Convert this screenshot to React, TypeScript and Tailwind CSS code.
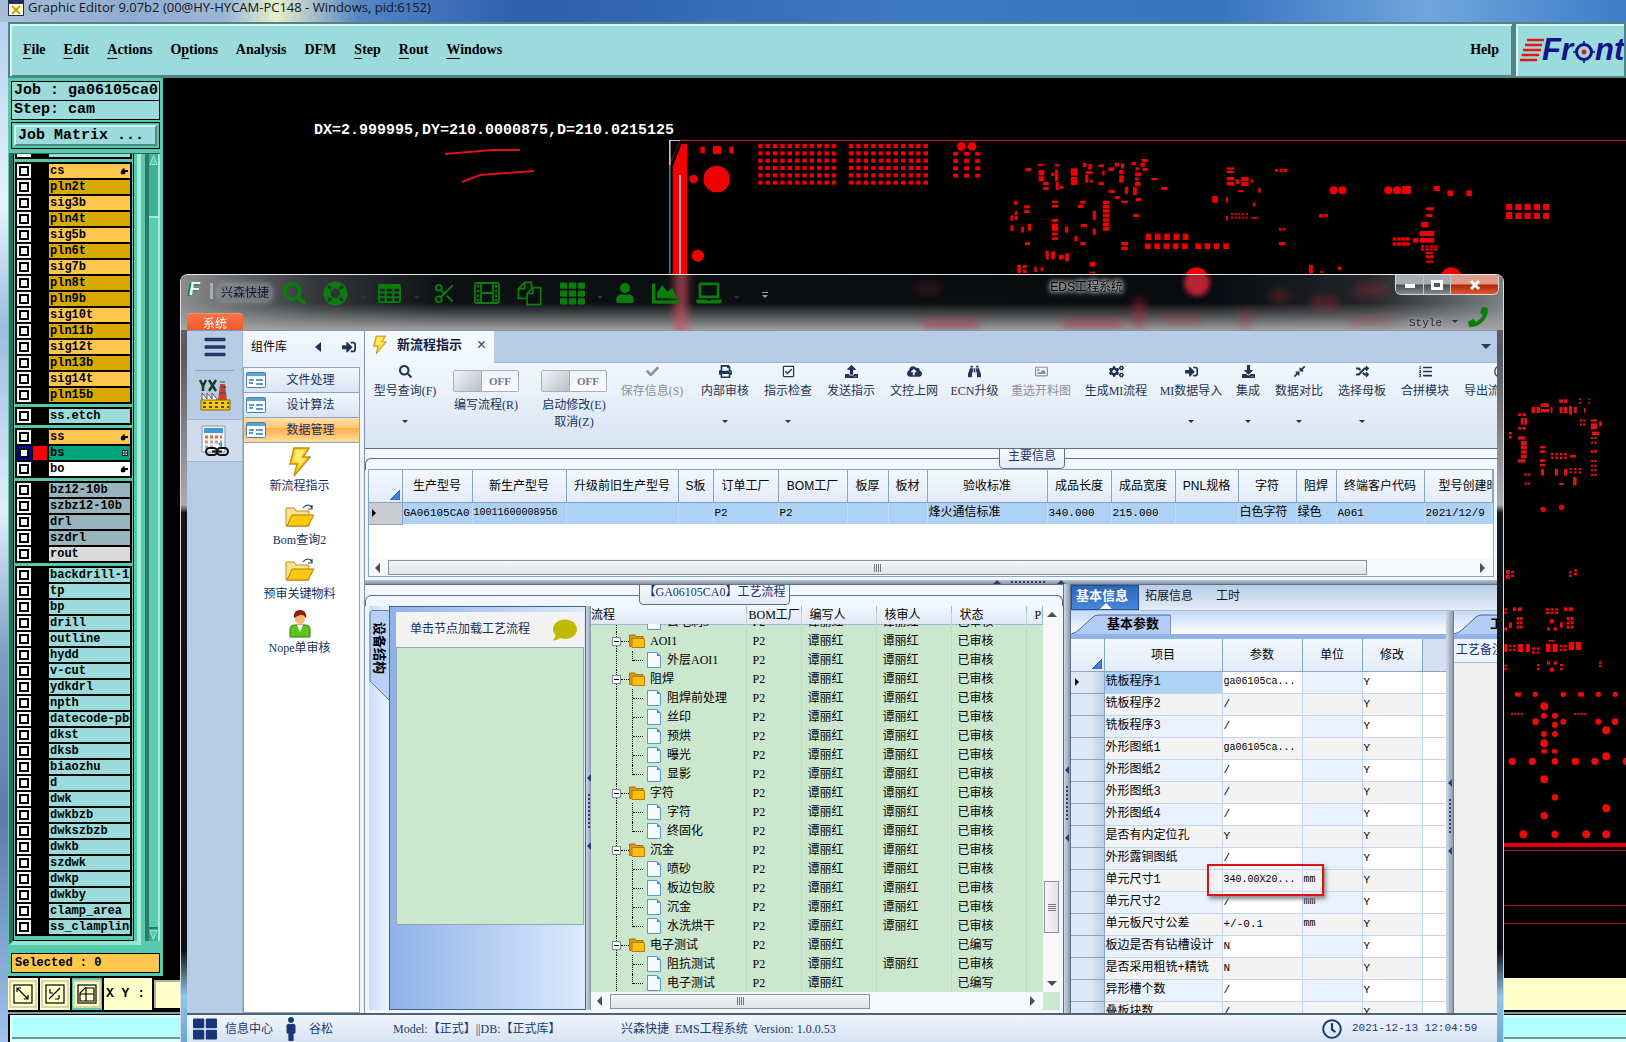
import React from "react";
import {
  FaBars, FaBinoculars, FaChartArea, FaCloudUploadAlt, FaCheck, FaCogs, FaDownload,
  FaLaptop, FaLifeRing, FaListOl, FaMale, FaPhoneAlt, FaPrint, FaRandom, FaRegCheckSquare,
  FaRegClock, FaRegImage, FaSearch, FaSignInAlt, FaTh, FaThLarge, FaUpload,
  FaUser, FaCompressAlt, FaComment,
} from "react-icons/fa";
import { Scissors } from "lucide-react";

const SERIF = "font-['Liberation_Serif','Noto_Sans_CJK_SC',serif]";
const SANS = "font-['Liberation_Sans','Noto_Sans_CJK_SC',sans-serif]";
const MONO = "font-['Liberation_Mono','Noto_Sans_CJK_SC',monospace]";

type Box = [number, number, number, number];

/* ---------- board artwork ---------- */

function Boxes({ items }: { items: Box[] }) {
  return (
    <>
      {items.map(([x, y, w, h], i) => (
        <rect key={i} x={x} y={y} width={w} height={h} />
      ))}
    </>
  );
}

function PadGrid({ x, y, cols, rows, dx, dy, w, h }: { x: number; y: number; cols: number; rows: number; dx: number; dy: number; w: number; h: number }) {
  const items: Box[] = [];
  for (let r = 0; r < rows; r++) for (let c = 0; c < cols; c++) items.push([x + c * dx, y + r * dy, w, h]);
  return <Boxes items={items} />;
}

const topPads: Box[] = [
  [96, 50, 7, 20], [116, 48, 13, 24], [142, 50, 7, 20],
  [613, 114, 9, 9], [633, 102, 9, 6], [660, 102, 7, 7], [634, 120, 9, 16], [634, 139, 9, 15], [654, 128, 5, 10], [660, 119, 5, 34],
  [641, 156, 9, 9], [641, 171, 9, 9], [661, 156, 5, 24], [668, 168, 5, 9], [685, 115, 10, 22], [685, 141, 10, 24], [704, 99, 6, 12],
  [713, 102, 6, 16], [709, 124, 11, 8], [708, 134, 5, 24], [715, 150, 5, 8], [729, 103, 9, 8], [735, 122, 4, 14], [729, 156, 9, 9],
  [745, 112, 9, 11], [755, 98, 7, 12], [765, 100, 5, 16], [762, 120, 7, 12], [762, 136, 7, 22], [782, 96, 7, 9], [798, 87, 10, 9], [796, 98, 7, 12],
  [788, 112, 6, 9], [799, 114, 9, 9], [787, 128, 10, 10], [787, 142, 6, 9], [787, 156, 9, 12], [771, 170, 5, 22], [784, 171, 6, 24],
  [745, 180, 10, 9], [755, 198, 8, 9], [765, 212, 11, 7], [788, 204, 9, 9], [813, 144, 11, 6], [829, 171, 10, 9],
  [595, 212, 5, 13], [611, 226, 9, 9], [611, 240, 9, 9], [596, 243, 5, 12], [589, 256, 5, 16], [596, 258, 5, 12], [589, 286, 5, 17],
  [606, 290, 5, 18], [617, 282, 5, 20], [612, 336, 8, 9], [655, 212, 10, 7], [655, 225, 10, 8], [700, 212, 9, 9], [696, 225, 9, 9],
  [720, 242, 5, 28], [736, 212, 10, 10], [736, 225, 10, 10], [736, 238, 10, 10], [736, 251, 10, 10], [736, 265, 10, 10], [736, 278, 10, 10], [736, 291, 10, 11],
  [655, 267, 10, 9], [655, 281, 10, 22], [655, 308, 10, 8], [655, 322, 10, 8], [676, 290, 5, 18], [691, 318, 5, 16], [701, 282, 10, 9], [720, 296, 5, 18], [700, 336, 9, 9],
  [784, 252, 10, 9], [765, 336, 11, 10], [765, 350, 11, 10], [645, 362, 5, 26], [654, 364, 6, 24], [666, 375, 8, 14], [676, 370, 6, 24],
  [600, 405, 6, 24], [609, 405, 6, 9], [609, 419, 6, 10], [627, 410, 4, 16], [637, 412, 4, 12], [715, 396, 9, 14], [715, 425, 9, 5],
  [933, 112, 12, 7], [933, 123, 12, 6], [933, 141, 12, 10], [933, 155, 12, 12], [947, 148, 6, 14], [956, 141, 12, 12], [956, 156, 12, 12], [971, 148, 4, 10],
  [951, 180, 8, 6], [983, 174, 4, 14], [910, 198, 9, 20], [932, 201, 3, 17], [975, 217, 3, 13],
  [932, 258, 3, 14], [972, 261, 9, 5],
  [1080, 252, 6, 11], [1088, 252, 6, 9], [1016, 294, 4, 8], [1022, 294, 4, 8], [1016, 336, 10, 9],
  [1212, 168, 14, 24], [1262, 168, 10, 15], [1284, 181, 9, 17], [1314, 181, 9, 17],
  [1250, 232, 13, 9], [1250, 252, 10, 9], [1242, 276, 12, 16], [1240, 303, 23, 15], [1240, 324, 23, 14], [1229, 324, 9, 14],
  [1250, 366, 12, 6], [1250, 376, 12, 9], [1250, 392, 12, 6],
  [1377, 246, 10, 21], [1064, 405, 6, 25], [1082, 423, 4, 6], [1110, 410, 5, 10],
];

const sidePads: Box[] = [
  [1376, 418, 11, 11], [1390, 418, 10, 11], [1433, 415, 6, 5], [1433, 426, 6, 5], [1460, 415, 5, 5], [1460, 426, 5, 5], [1323, 430, 24, 11], [1297, 441, 11, 18], [1311, 441, 11, 18],
  [1324, 447, 24, 10], [1352, 441, 5, 18], [1377, 441, 9, 18], [1390, 441, 10, 18], [1404, 438, 9, 26], [1418, 441, 9, 18], [1447, 444, 5, 14],
  [1258, 460, 10, 8], [1271, 460, 10, 8], [1266, 474, 8, 20], [1276, 474, 8, 20], [1258, 501, 10, 8], [1271, 501, 10, 8], [1232, 516, 8, 8], [1232, 528, 8, 8], [1258, 529, 22, 10], [1266, 543, 17, 14], [1266, 558, 17, 10],
  [1266, 571, 17, 10], [1266, 584, 17, 11], [1258, 598, 22, 10], [1276, 640, 7, 7], [1286, 640, 7, 7], [1276, 668, 7, 6], [1286, 668, 7, 6], [1321, 558, 16, 7], [1321, 571, 16, 8],
  [1321, 598, 16, 8], [1321, 612, 16, 7], [1324, 627, 9, 20], [1407, 585, 17, 8], [1364, 627, 9, 20],
  [1390, 627, 9, 20], [1416, 651, 10, 25], [1376, 669, 14, 6], [1436, 478, 6, 7], [1445, 478, 6, 7], [1436, 490, 6, 7], [1445, 490, 6, 7],
  [1467, 478, 18, 7], [1467, 490, 18, 18], [1491, 484, 8, 14], [1470, 515, 22, 10],
];

const lowerPads: Box[] = [
  [978, 30, 12, 11], [978, 44, 12, 12], [993, 33, 9, 7], [993, 44, 9, 7], [1167, 33, 8, 7], [1167, 44, 8, 7], [1182, 28, 9, 7], [1182, 39, 9, 7],
  [973, 145, 8, 6], [973, 155, 8, 6], [999, 142, 9, 11], [1014, 142, 12, 11], [1152, 142, 10, 11], [1166, 142, 13, 11],
  [987, 187, 9, 17], [973, 202, 8, 10], [1110, 178, 12, 12], [1140, 187, 9, 16],
  [1101, 202, 9, 10], [1121, 202, 10, 10], [973, 252, 10, 24], [1013, 252, 16, 24],
  [1038, 252, 12, 24], [1098, 252, 14, 24], [1118, 252, 15, 24], [1106, 240, 18, 5],
  [1166, 246, 16, 24], [1187, 246, 16, 24], [973, 314, 8, 6], [973, 324, 8, 6], [1071, 312, 8, 7], [1071, 324, 8, 7], [1101, 304, 9, 10], [1122, 304, 9, 10],
  [1110, 323, 12, 12], [1140, 312, 9, 7], [1140, 324, 9, 7], [1257, 304, 8, 7], [1257, 315, 8, 6], [1005, 397, 18, 13], [1194, 397, 18, 13], [1084, 568, 17, 12], [1116, 568, 17, 12],
];

const lowerVias: [number, number, number][] = [
  [1066, 403, 8], [1150, 403, 8], [1255, 403, 8], [1306, 403, 8], [1093, 439, 12], [1092, 467, 9], [1125, 467, 9], [1067, 485, 10], [1125, 494, 9], [1150, 485, 9],
  [1255, 485, 9], [1305, 485, 10], [1279, 511, 12], [1092, 522, 9], [1125, 522, 9], [1093, 550, 12], [1279, 589, 12], [997, 604, 11], [1057, 604, 11], [1125, 604, 10],
  [1186, 604, 11], [1245, 604, 11], [1338, 604, 10], [1093, 658, 12], [1125, 712, 10], [1279, 745, 12], [1093, 767, 11], [1030, 823, 12], [1125, 823, 11], [1219, 823, 12], [1279, 823, 12],
];

function BoardArtwork() {
  return (
    <svg className="absolute inset-0 h-full w-full" aria-hidden="true">
      <g transform="translate(-163 -78)">
        <path d="M445 154 L492 150 L520 150 M462 182 L480 175 L534 171" fill="none" stroke="#e01212" strokeWidth="2" />
        <g transform="translate(640 130) scale(.6288 .3333)" fill="#f00000">
          <rect x="63" y="30" width="1700" height="3" fill="#d01010" />
          <path d="M52 470V110L66 42H75V470Z" />
          <rect x="62" y="135" width="3" height="330" fill="#b8b8b8" />
          <path d="M47 105 L63 34" stroke="#c01010" strokeWidth="1.5" />
          <path d="M47.5 105V31H64" fill="none" stroke="#fff" strokeWidth="2" />
          <path d="M47.500 105V470" fill="none" stroke="#4fd0d0" strokeWidth="1.6" />
          <ellipse cx="122" cy="147" rx="21" ry="40" />
          <ellipse cx="85" cy="147" rx="7" ry="13" />
          <ellipse cx="92" cy="377" rx="10" ry="18" />
          <ellipse cx="511" cy="49" rx="7" ry="13" />
          <ellipse cx="528" cy="49" rx="7" ry="13" />
          <PadGrid x={188} y={42} cols={11} rows={6} dx={11.7} dy={22} w={7} h={12} />
          <PadGrid x={332} y={42} cols={11} rows={6} dx={11.9} dy={22} w={7} h={12} />
          <PadGrid x={498} y={65} cols={3} rows={4} dx={17.5} dy={22} w={8} h={12} />
          <PadGrid x={804} y={311} cols={5} rows={1} dx={14.8} dy={0} w={9} h={19} />
          <PadGrid x={803} y={340} cols={5} rows={1} dx={14.8} dy={0} w={9} h={17} />
          <PadGrid x={883} y={340} cols={4} rows={1} dx={14.8} dy={0} w={9} h={17} />
          <PadGrid x={1377} y={222} cols={5} rows={2} dx={14.8} dy={27} w={10} h={18} />
          <PadGrid x={940} y={249} cols={5} rows={2} dx={6} dy={11} w={3} h={6} />
          <PadGrid x={1010} y={117} cols={3} rows={1} dx={7} dy={0} w={5} h={9} />
          <PadGrid x={1197} y={322} cols={4} rows={2} dx={7} dy={15} w={6} h={10} />
          <PadGrid x={1242} y={346} cols={4} rows={2} dx={7} dy={9} w={5} h={7} />
          {[[1103, 181], [1117, 181], [1190, 181], [1204, 181]].map(([x, y]) => (
            <ellipse key={x} cx={x} cy={y} rx="6.500" ry="12" />
          ))}
          <ellipse cx="885" cy="450" rx="19" ry="38" />
          <ellipse cx="1290" cy="450" rx="18" ry="38" />
          <Boxes items={topPads} />
        </g>
        <g transform="translate(1080 260) scale(.3482 .3333)" fill="#dd1414">
          <Boxes items={sidePads} />
          <PadGrid x={1352} y={579} cols={4} rows={2} dx={13} dy={11} w={8} h={7} />
          <PadGrid x={1406} y={624} cols={3} rows={2} dx={13} dy={10} w={7} h={6} />
          <PadGrid x={1467} y={531} cols={2} rows={2} dx={10} dy={14} w={7} h={6} />
          <PadGrid x={1467} y={570} cols={2} rows={1} dx={10} dy={14} w={8} h={9} />
          <PadGrid x={1467} y={600} cols={2} rows={4} dx={10} dy={14} w={7} h={6} />
          <circle cx="1330" cy="748" r="8" fill="#f00000" />
          <circle cx="1383" cy="742" r="8" fill="#f00000" />
        </g>
        <g transform="translate(1180 560) scale(.3333)" fill="#ee0a0a">
          <Boxes items={lowerPads} />
          <PadGrid x={1098} y={145} cols={3} rows={2} dx={14} dy={10} w={9} h={7} />
          <PadGrid x={1010} y={171} cols={2} rows={3} dx={10} dy={13} w={8} h={9} />
          <PadGrid x={1160} y={171} cols={2} rows={3} dx={12} dy={13} w={9} h={9} />
          <PadGrid x={987} y={255} cols={2} rows={2} dx={12} dy={11} w={8} h={7} />
          <PadGrid x={1056} y={262} cols={2} rows={2} dx={14} dy={12} w={9} h={7} />
          <PadGrid x={1140} y={255} cols={2} rows={2} dx={12} dy={11} w={8} h={7} />
          <PadGrid x={993} y={459} cols={4} rows={1} dx={10} dy={0} w={6} h={6} />
          <PadGrid x={1182} y={459} cols={4} rows={1} dx={10} dy={0} w={6} h={6} />
          {lowerVias.map(([x, y, r]) => (
            <circle key={`${x}-${y}`} cx={x} cy={y} r={r} />
          ))}
        </g>
        <rect x="1500" y="843" width="900" height="4" fill="#e80000" />
        <rect x="1500" y="850" width="900" height="1" fill="#c81414" />
        <rect x="1500" y="905" width="900" height="1" fill="#b01010" />
        <rect x="1500" y="923" width="900" height="1" fill="#b01010" />
      </g>
    </svg>
  );
}

/* ---------- graphic editor ---------- */

const menus: [string, string, string][] = [
  ["", "F", "ile"], ["", "E", "dit"], ["", "A", "ctions"], ["O", "p", "tions"], ["Analysis", "", ""], ["DFM", "", ""], ["", "S", "tep"], ["", "R", "out"], ["", "W", "indows"],
];

type Tone = "amber" | "ochre" | "aqua" | "green" | "white" | "slate" | "silver";
const tones: Record<Tone, string> = {
  amber: "bg-[#fdc64f]", ochre: "bg-[#d8a900]", aqua: "bg-[#9bdbdb]", green: "bg-[#00a57c]", white: "bg-white", slate: "bg-[#9ab4bc]", silver: "bg-[#dadada]",
};
const layerGroups: [string, Tone, string?][][] = [
  [
    ["cs", "amber", "hand"], ["pln2t", "ochre"], ["sig3b", "amber"], ["pln4t", "ochre"], ["sig5b", "amber"], ["pln6t", "ochre"], ["sig7b", "amber"], ["pln8t", "ochre"],
    ["pln9b", "ochre"], ["sig10t", "amber"], ["pln11b", "ochre"], ["sig12t", "amber"], ["pln13b", "ochre"], ["sig14t", "amber"], ["pln15b", "ochre"],
  ],
  [["ss.etch", "aqua"]],
  [["ss", "amber", "hand"], ["bs", "green", "grid"], ["bo", "white", "hand"]],
  [["bz12-10b", "slate"], ["szbz12-10b", "slate"], ["drl", "slate"], ["szdrl", "slate"], ["rout", "silver"]],
  ["backdrill-16", "tp", "bp", "drill", "outline", "hydd", "v-cut", "ydkdrl", "npth", "datecode-pbc", "dkst", "dksb", "biaozhu", "d", "dwk", "dwkbzb", "dwkszbzb", "dwkb", "szdwk", "dwkp", "dwkby", "clamp_area", "ss_clampline"].map(
    (n) => [n, "aqua"] as [string, Tone],
  ),
];

function LayerRow({ name, tone, mark }: { name: string; tone: Tone; mark?: string }) {
  const active = name === "bs";
  return (
    <label className="flex h-3.5 items-center pl-0.5">
      <input
        type="checkbox"
        className={`size-3.5 shrink-0 appearance-none border-2 bg-white shadow-[inset_0_0_0_2px_#000] ${active ? "border-[#0000a8]" : "border-white"}`}
      />
      <span className={`ml-0.5 h-3.5 w-3.5 shrink-0 ${active ? "bg-[#ff0000]" : "bg-black"}`} />
      <span className={`ml-0.5 mr-0.5 flex h-3.5 min-w-0 flex-1 items-center justify-between overflow-hidden pr-0.5 pl-px text-xs/3.5 font-bold whitespace-nowrap text-black ${tones[tone]}`}>
        {name}
        {mark === "hand" && (
          <svg viewBox="0 0 9 8" className="h-2 w-2" aria-hidden="true">
            <path d="M1 4 5 0 5 3 9 3 9 5 6 5 6 7 3 8 1 7Z" />
          </svg>
        )}
        {mark === "grid" && (
          <svg viewBox="0 0 7 7" className="size-1.5" aria-hidden="true">
            <path d="M.5.500h6v6h-6zM3.500 0v7M0 3.500h7" fill="#e8f4ee" stroke="#000" />
          </svg>
        )}
      </span>
    </label>
  );
}

function LayerPanel() {
  return (
    <aside className={`flex w-[155px] shrink-0 flex-col bg-[#57c9ac] px-[3px] pt-[3px] pb-[3px] text-black ${MONO}`}>
      <div className="h-5 truncate border border-black bg-[#9bdbdb] pl-[2px] text-[15px]/[18px] font-bold">Job : ga06105ca0</div>
      <div className="h-[19px] border border-t-0 border-black bg-[#9bdbdb] pl-[2px] text-[15px]/[18px] font-bold">Step: cam</div>
      <div className="mt-[2px] mb-1 w-full border border-black p-[2px]">
        <button type="button" className="block h-[21px] w-full border-2 border-t-[#d0f2f2] border-r-[#4f8a8a] border-b-[#4f8a8a] border-l-[#d0f2f2] bg-[#9bdbdb] pl-0.5 text-left text-[15px]/[17px] font-bold">
          Job Matrix ...
        </button>
      </div>
      <div className="-ml-0.5 flex min-h-0 flex-1 border-t border-[#2d6a5b]">
        <div className="flex min-w-0 flex-1 flex-col border-b-4 border-l-4 border-b-[#8fe6cd] border-l-[#2d6a5b]">
          <div className="mr-[9px] flex min-h-0 flex-1 flex-col overflow-hidden border border-t-0 border-black pl-px">
            <div className="mb-[3px] h-[5px] w-[117px] shrink-0 bg-black px-0.5">
              <div className="flex h-[3px] gap-[18px]">
                <span className="w-3.5 bg-white" />
                <span className="flex-1 bg-[#9bdbdb]" />
              </div>
            </div>
            {layerGroups.map((g, i) => (
              <div key={i} className="mb-[3px] flex w-[117px] shrink-0 flex-col gap-0.5 bg-black py-0.5">
                {g.map(([n, t, m]) => (
                  <LayerRow key={n} name={n} tone={t} mark={m} />
                ))}
              </div>
            ))}
          </div>
        </div>
        <div className="-ml-1.5 w-2 border-x-4 border-l-[#a5ecd8] border-r-[#57c9ac]" />
        <div className="mb-1 flex w-[15px] flex-col border-l-4 border-r-2 border-l-[#2d7a66] border-r-[#a5ecd8] bg-[#45ad93]">
          <svg viewBox="0 0 10 12" className="h-3 w-full" aria-hidden="true">
            <path d="M5 1 1 11H9Z" fill="#57c9ac" stroke="#a5ecd8" />
          </svg>
          <div className="h-[50px]" />
          <div className="flex-1 border-t-2 border-b-2 border-t-[#a5ecd8] border-b-[#2d7a66] bg-[#57ccaf]" />
          <svg viewBox="0 0 10 12" className="h-3 w-full" aria-hidden="true">
            <path d="M1 1H9L5 11Z" fill="#57c9ac" stroke="#a5ecd8" />
          </svg>
        </div>
      </div>
      <div className="mt-2 h-5 border border-black bg-[#fdc64f] pl-[3px] text-xs/[18px] font-bold">Selected : 0</div>
    </aside>
  );
}

function GraphicEditor() {
  return (
    <div className="flex h-full flex-col">
      <header className="flex h-[22px] shrink-0 items-start gap-1 overflow-hidden bg-[linear-gradient(90deg,#a9bfd8_0,#8fabd0_8%,#9db7d6_14%,#e9eecb_17%,#5585c4_22%,#2c5fae_32%,#3f78c2_55%,#3a74c0_75%,#6fa6de_88%,#3f7cc6_100%)] pl-2">
        <span className="flex size-4 shrink-0 items-center justify-center border border-t-4 border-[#222a55] bg-[#fdfbe0]">
          <svg viewBox="0 0 10 10" className="size-2.5" aria-hidden="true">
            <path d="M1 1 9 9M9 1 1 9" stroke="#b8a800" strokeWidth="2" />
          </svg>
        </span>
        <h1 className="text-[13px]/[14px] text-[#101820] font-['Open_Sans','Noto_Sans',sans-serif]">Graphic Editor 9.07b2 (00@HY-HYCAM-PC148 - Windows, pid:6152)</h1>
      </header>
      <div className="flex min-h-0 flex-1 bg-[linear-gradient(180deg,#b7d2ee_0,#e8f2fc_18%,#9dbbe0_30%,#e4eefa_48%,#7e9dc4_62%,#5d7ca8_78%,#9fc3ec_100%)] pl-2">
        <div className="flex min-w-0 flex-1 flex-col bg-black">
          <div className="flex h-14 shrink-0">
            <nav className="flex min-w-0 flex-1 items-center gap-[18px] border-2 border-[#4f8585] bg-[#9bdbdb] pr-[13px] pl-[13px] text-sm font-bold text-black shadow-[inset_2px_2px_0_#d8f4f4,inset_-1px_-1px_0_#4f8585] font-['Liberation_Serif',serif]">
              {menus.map(([a, b, c]) => (
                <button type="button" key={a + b + c}>
                  {a}
                  <span className="underline underline-offset-4">{b}</span>
                  {c}
                </button>
              ))}
              <button type="button" className="ml-auto">Help</button>
            </nav>
            <div className="flex w-[112px] shrink-0 items-center overflow-hidden border-2 border-[#4f8585] bg-[#9bdbdb] pl-1 whitespace-nowrap shadow-[inset_2px_2px_0_#d8f4f4]">
              <svg viewBox="0 0 24 24" className="h-6 w-6 shrink-0" aria-hidden="true">
                <path d="M7 2H24M5 7H22M3 12H21M1.500 17H19M0 22H17" stroke="#e01818" strokeWidth="2.500" />
              </svg>
              <span className="-ml-0.5 flex items-center text-[31px]/7 font-bold text-[#12128c] italic font-['Liberation_Sans',sans-serif]">
                Fr
                <svg viewBox="0 0 22 22" className="mt-1 size-[22px] shrink-0" role="img" aria-label="o">
                  <circle cx="11" cy="11" r="7.500" fill="none" stroke="#12128c" strokeWidth="3" />
                  <path d="M11 0v5M11 17v5M0 11h5M17 11h5" stroke="#12128c" strokeWidth="1.500" />
                  <circle cx="11" cy="11" r="2.500" fill="#e01818" />
                </svg>
                ntline
              </span>
            </div>
          </div>
          <div className="flex min-h-0 flex-1">
            <LayerPanel />
            <div className="relative min-w-0 flex-1 overflow-hidden bg-black">
              <BoardArtwork />
              <p className={`absolute top-[45px] left-[151px] text-[15px]/4 font-bold whitespace-nowrap text-white ${MONO}`}>DX=2.999995,DY=210.0000875,D=210.0215125</p>
            </div>
          </div>
          <div className={`flex h-9 shrink-0 items-stretch border-t-2 border-b-2 border-black bg-[#ffffcc] ${MONO}`}>
            {[
              <path key="a" d="M4 4 15 15M4 8V4H8M15 11V15H11" />,
              <path key="b" d="M4 15 15 4M5 5V9H8M10 15H14M14 11V15" />,
              <path key="c" d="M9 3V17M3 10H17M3 17V9L8 4H17V17Z" />,
            ].map((p, i) => (
              <button type="button" key={i} aria-label={["缩放", "测量", "网格"][i]} className={`flex w-8 items-center justify-center border-r-2 border-black ${i === 2 ? "bg-[#57c9ac]" : ""}`}>
                <span className="flex size-7 items-center justify-center border-2 border-[#d6d6a8] bg-[#ffffcc]">
                  <svg viewBox="0 0 20 20" className="size-5" fill="none" stroke="#000" strokeWidth="1.200" aria-hidden="true">
                    <rect x="1" y="1" width="18" height="18" />
                    {p}
                  </svg>
                </span>
              </button>
            ))}
            <label htmlFor="xy" className="w-[47px] self-center pl-0.5 text-[13px] font-bold whitespace-pre">X Y :</label>
            <input id="xy" className="ml-px w-40 border-2 border-black bg-[#ffffcc] px-2 shadow-[inset_2px_2px_0_#b5b58c]" />
          </div>
          <div className="h-[30px] shrink-0 bg-[#7fa0a0] pt-0.5">
            <div className="h-7 border-t border-l-2 border-black bg-[#b4ffff] shadow-[inset_2px_2px_0_#e0ffff,inset_0_-3px_0_#dff,inset_0_-5px_0_#6b9a9a]" />
          </div>
        </div>
      </div>
    </div>
  );
}

/* ---------- small drawings ---------- */

function TableGlyph({ className }: { className: string }) {
  return (
    <svg viewBox="0 0 24 22" className={className} aria-hidden="true">
      <path fill="currentColor" fillRule="evenodd" d="M2 1H22Q24 1 24 3V19Q24 21 22 21H2Q0 21 0 19V3Q0 1 2 1ZM2 6V9H7V6ZM9 6V9H15V6ZM17 6V9H22V6ZM2 11V14H7V11ZM9 11V14H15V11ZM17 11V14H22V11ZM2 16V19H7V16ZM9 16V19H15V16ZM17 16V19H22V16Z" />
    </svg>
  );
}

function FilmGlyph({ className }: { className: string }) {
  return (
    <svg viewBox="0 0 26 24" className={className} fill="none" stroke="currentColor" strokeWidth="1.800" aria-hidden="true">
      <rect x="1" y="2" width="24" height="20" rx="1.500" />
      <path d="M7 2V22M19 2V22M7 12H19" />
      <path d="M4 4V22M22 4V22" strokeWidth="2.500" strokeDasharray="2.500 2.200" />
    </svg>
  );
}

function PagesGlyph({ className }: { className: string }) {
  return (
    <svg viewBox="0 0 26 26" className={className} fill="none" stroke="currentColor" strokeWidth="1.800" aria-hidden="true">
      <path d="M10 18H1.500V8L8 1.500H15V7M8 1.500V8H1.500" />
      <path d="M16.500 7H24.500V24.500H10.500V13ZM16.500 7V13H10.500" />
    </svg>
  );
}

function Bolt({ className }: { className: string }) {
  return (
    <svg viewBox="0 0 22 30" className={className} aria-hidden="true">
      <path d="M5 1H20L14 10H21L5 29L8 17H1Z" fill="#fcd116" stroke="#c88a10" strokeWidth="1.400" />
      <path d="M7 3H16L11 11H17L9 21L11 15H4Z" fill="#fff3a0" opacity=".7" />
    </svg>
  );
}

function OpenFolder() {
  return (
    <svg viewBox="0 0 30 24" className="h-6 w-[30px]" aria-hidden="true">
      <path d="M1 4H9L11 7H24V22H1Z" fill="#fbe38a" stroke="#c48a20" />
      <path d="M7 11H29L23 22H2Z" fill="#fcc90e" stroke="#b87a10" />
      <path d="M18 4C21 0 25 0 27 4M27 1V5H23" fill="none" stroke="#24405e" strokeWidth="1.200" />
    </svg>
  );
}

function Person() {
  return (
    <svg viewBox="0 0 22 28" className="h-7 w-[22px]" aria-hidden="true">
      <path d="M1 27V19Q1 15 6 15H16Q21 15 21 19V27Z" fill="#5fc41c" stroke="#2c7a0c" />
      <path d="M8 15 11 22 14 15Z" fill="#fff" />
      <ellipse cx="11" cy="8" rx="5" ry="6.500" fill="#f4b870" />
      <path d="M5 8Q4 0 11 0T17 8Q14 4 11 5T5 8Z" fill="#8c1d0a" />
    </svg>
  );
}

function Factory() {
  return (
    <svg viewBox="0 0 32 32" className="size-8" aria-hidden="true">
      <path d="M1 1 4 7 7 1M4 7V12M10 1 17 12M17 1 10 12" fill="none" stroke="#1c3c28" strokeWidth="2.500" />
      <path d="M21 5H26L28 22H19Z" fill="#d23c28" />
      <path d="M21 8H27M20 14H27" stroke="#555" strokeWidth="2" />
      <path d="M21 4H26V2H21Z" fill="#888" />
      <path d="M3 22V14L8 20V14L13 20V14L18 20V22Z" fill="#fff" stroke="#555" />
      <path d="M2 21H31V31H2Z" fill="#f4cc18" stroke="#8a6a00" />
      <path d="M4 24H30M4 28H30" stroke="#5a4700" strokeWidth="2" strokeDasharray="3 3" />
    </svg>
  );
}

function Calculator() {
  return (
    <svg viewBox="0 0 30 32" className="h-8 w-[30px]" aria-hidden="true">
      <path d="M2 1H25V27H2Z" fill="#f2f4f6" stroke="#8a96a4" />
      <path d="M4 3H23V8H4Z" fill="#3d9ad8" />
      <path d="M5 12H22" stroke="#e06a30" strokeWidth="3" strokeDasharray="3 2" />
      <path d="M5 17H22M5 22H14" stroke="#b0a8a8" strokeWidth="3" strokeDasharray="3 2" />
      <path d="M18 18H22V24Z" fill="#2aa0d0" />
      <g fill="none" stroke="#111" strokeWidth="2">
        <rect x="6" y="23" width="11" height="7" rx="3.500" />
        <rect x="17" y="23" width="11" height="7" rx="3.500" />
        <path d="M12 26.500H22" />
      </g>
    </svg>
  );
}

function FolderIcon() {
  return (
    <svg viewBox="0 0 16 14" className="h-3.5 w-4 shrink-0" aria-hidden="true">
      <path d="M.5 12.500V1H6L7 2.500H14V12.500Z" fill="#d99a1c" stroke="#a8720c" />
      <path d="M3 4.500H15.500V13.500H3Z" fill="#fdc010" stroke="#b87c08" />
    </svg>
  );
}

function FileIcon() {
  return (
    <svg viewBox="0 0 14 16" className="h-4 w-3.5 shrink-0" aria-hidden="true">
      <path d="M.5 15.500V.5H10L13.500 4V15.500Z" fill="#f4faff" stroke="#5a96cc" />
      <path d="M10 .5V4H13.500Z" fill="#3f86d8" />
    </svg>
  );
}

function PanelIcon() {
  return (
    <svg viewBox="0 0 20 16" className="h-4 w-5 shrink-0" aria-hidden="true">
      <rect x=".5" y=".5" width="19" height="15" rx="1" fill="#fff" stroke="#3d7fae" />
      <path d="M1 1H19V4H1Z" fill="#5fa0cf" />
      <path d="M3 8H8M3 11H7M10 8H17M10 12H17" stroke="#5f9ccb" strokeWidth="2" />
    </svg>
  );
}

function Caret({ className = "" }: { className?: string }) {
  return <span className={`inline-block border-x-[3px] border-t-[3px] border-x-transparent border-t-[#1f3550] ${className}`} />;
}

function Corner() {
  return (
    <svg viewBox="0 0 10 10" className="absolute right-0.5 bottom-0.5 size-2.5" aria-hidden="true">
      <path d="M10 0V10H0Z" fill="#3f80dc" stroke="#2a5cae" />
    </svg>
  );
}

function SplitV({ className }: { className: string }) {
  return (
    <div className={`flex shrink-0 flex-col items-center bg-[linear-gradient(90deg,#d0dae6,#8b9aac)] ${className}`}>
      <span className="border-y-4 border-r-4 border-y-transparent border-r-[#24407a]" />
      <span className="my-3 h-9 w-0.5 bg-[repeating-linear-gradient(180deg,#24407a_0_2px,transparent_2px_4px)]" />
      <span className="border-y-4 border-r-4 border-y-transparent border-r-[#24407a]" />
    </div>
  );
}

function ScrollH({ className, thumb }: { className: string; thumb: string }) {
  return (
    <div className={`flex shrink-0 items-center bg-[#f7f8fa] ${className}`}>
      <span className="mr-2 ml-1.5 border-y-[5px] border-r-[5px] border-y-transparent border-r-[#4a5058]" />
      <div className={`flex h-[15px] items-center justify-center border border-[#8b929c] bg-[linear-gradient(180deg,#f4f5f7,#e0e3e8)] ${thumb}`}>
        <span className="h-2 w-[7px] bg-[repeating-linear-gradient(90deg,#777_0_1px,transparent_1px_2px)]" />
      </div>
      <span className="mr-2 ml-auto border-y-[5px] border-l-[5px] border-y-transparent border-l-[#4a5058]" />
    </div>
  );
}

/* ---------- EDS window ---------- */

function TitleBar() {
  const ic = "shrink-0 text-[#0a7d0a]";
  return (
    <header className="relative h-[55px] shrink-0 overflow-hidden">
      <svg className="absolute inset-0 h-full w-full" aria-hidden="true">
        <defs>
          <linearGradient id="glassX">
            <stop offset="0" stopColor="#8a8c8e" />
            <stop offset=".05" stopColor="#5e6164" />
            <stop offset=".1" stopColor="#34383b" />
            <stop offset=".2" stopColor="#0d1114" />
            <stop offset=".78" stopColor="#080c10" />
            <stop offset=".9" stopColor="#22272b" />
            <stop offset="1" stopColor="#7c8083" />
          </linearGradient>
          <linearGradient id="glassY" x2="0" y2="1">
            <stop offset="0" stopColor="#9fa0a0" stopOpacity="0" />
            <stop offset="1" stopColor="#a8a8a8" stopOpacity=".95" />
          </linearGradient>
          <filter id="soft" x="-50%" y="-50%" width="200%" height="200%">
            <feGaussianBlur stdDeviation="5" />
          </filter>
          <filter id="softer" x="-50%" y="-50%" width="200%" height="200%">
            <feGaussianBlur stdDeviation="2.500" />
          </filter>
        </defs>
        <rect width="100%" height="100%" fill="url(#glassX)" />
        <rect y="28" width="100%" height="27" fill="url(#glassY)" />
        <g fill="#c02838" filter="url(#soft)" opacity=".75">
          <rect x="494" y="-10" width="12" height="80" fill="#d05060" />
          <rect x="742" y="46" width="56" height="7" opacity=".8" />
          <rect x="882" y="46" width="60" height="7" opacity=".8" />
          <rect x="952" y="24" width="12" height="30" opacity=".6" />
          <rect x="980" y="40" width="40" height="8" opacity=".5" />
          <rect x="1090" y="16" width="18" height="10" opacity=".5" />
          <rect x="1130" y="22" width="26" height="12" opacity=".5" />
          <rect x="1175" y="8" width="30" height="14" opacity=".4" />
          <rect x="1170" y="42" width="40" height="8" opacity=".4" />
          <rect x="1060" y="36" width="8" height="18" opacity=".6" />
          <rect x="735" y="10" width="24" height="8" opacity=".4" />
        </g>
        <circle cx="1016" cy="8" r="13" fill="#b82230" filter="url(#softer)" />
      </svg>
      <div className="relative flex h-full justify-between">
        <div>
          <div className="flex h-9 items-center pl-2">
            <span className="mb-2 w-[21px] text-lg/5 font-bold text-[#e8fff0] italic [text-shadow:-2px_1px_0_#0a8a48] font-['Liberation_Sans',sans-serif]">F</span>
            <span className="mb-1 h-4 w-[3px] bg-[#a9abac]" />
            <span className={`mr-3 ml-1.5 rounded-sm bg-[#8a8e92]/60 px-0.5 text-xs/4 text-[#10182c] shadow-[0_0_6px_#aaa] ${SANS}`}>兴森快捷</span>
            <div className="flex items-center">
              <FaSearch className={`${ic} size-[23px]`} />
              <FaLifeRing className={`${ic} ml-[17px] size-[25px]`} />
              <Caret className="mt-2 ml-[13px]" />
              <TableGlyph className={`${ic} ml-[11px] h-[21px] w-[23px]`} />
              <Caret className="mt-2 ml-[13px]" />
              <Scissors className={`${ic} ml-[13px] size-[23px]`} />
              <FilmGlyph className={`${ic} ml-[18px] h-6 w-[26px]`} />
              <PagesGlyph className={`${ic} ml-[17px] size-[25px]`} />
              <FaTh className={`${ic} ml-[18px] size-[25px]`} />
              <Caret className="mt-2 ml-[12px]" />
              <FaUser className={`${ic} ml-[12px] size-[20px]`} />
              <FaChartArea className={`${ic} ml-[17px] size-[27px]`} />
              <FaLaptop className={`${ic} ml-[17px] size-[26px]`} />
              <Caret className="mt-2 ml-[12px]" />
              <span className="mt-1 ml-[22px] flex flex-col items-center gap-px border-t border-[#9a9ea2] pt-0.5">
                <span className="border-x-[3px] border-t-[3px] border-x-transparent border-t-[#9a9ea2]" />
              </span>
            </div>
          </div>
          <button type="button" className={`mt-0.5 ml-1.5 block h-[17px] w-14 overflow-hidden rounded-t-sm border-t border-[#ff9070] bg-[linear-gradient(180deg,#fb7348,#ee5a2c)] text-center text-xs/[20px] text-white ${SANS}`}>系统</button>
        </div>
        <h2 className={`mr-[268px] ml-auto self-start px-1 pt-1 text-xs/4 text-black [text-shadow:0_0_6px_#ccc,0_0_6px_#ccc,0_0_4px_#bbb,0_0_2px_#999] ${SANS}`}>EDS工程系统</h2>
        <div className="mr-1 flex w-[104px] flex-col">
          <div className="flex h-5 overflow-hidden rounded-b-md border border-t-0 border-[#d4d8dc]">
            <button type="button" aria-label="最小化" className="flex w-7 items-end justify-center border-r border-[#c0c4c8] bg-[linear-gradient(180deg,#a8acb0_45%,#4c5054_55%,#85898d)] pb-1.5">
              <span className="h-1 w-2.5 bg-white" />
            </button>
            <button type="button" aria-label="最大化" className="flex w-[27px] items-center justify-center border-r border-[#c0c4c8] bg-[linear-gradient(180deg,#a8acb0_45%,#4c5054_55%,#85898d)]">
              <span className="h-2.5 w-3 border-[3px] border-white bg-[#555]" />
            </button>
            <button type="button" aria-label="关闭" className="flex flex-1 items-center justify-center bg-[linear-gradient(180deg,#e09a88_45%,#b42808_55%,#dd5a30)]">
              <svg viewBox="0 0 12 10" className="h-2.5 w-3" aria-hidden="true">
                <path d="M2 1 10 9M10 1 2 9" stroke="#fff" strokeWidth="3" />
              </svg>
            </button>
          </div>
          <div className="flex flex-1 items-end gap-2.5 pb-px pl-3.5">
            <span className={`text-[11px]/3 text-[#1a2436] [text-shadow:0_0_4px_#ccc] ${MONO}`}>Style</span>
            <Caret className="mb-1.5" />
            <FaPhoneAlt className="mb-0.5 size-5 -scale-x-100 text-[#0a7d0a]" />
          </div>
        </div>
      </div>
    </header>
  );
}

function NavRail() {
  return (
    <nav className="flex w-14 shrink-0 flex-col border-r border-[#9fb4d2] bg-[#b9cce6]">
      <button type="button" aria-label="菜单" className="mx-2 flex h-10 items-center justify-center border-b border-[#8fa6c6] pb-2 pl-0">
        <FaBars className="size-6 text-[#1f3a66]" />
      </button>
      <button type="button" aria-label="YX" className="flex h-12 items-center justify-center">
        <Factory />
      </button>
      <button type="button" aria-label="数据" className="flex h-[43px] items-center justify-center border-y border-[#a3b7d4] bg-[#cfdcee]">
        <Calculator />
      </button>
    </nav>
  );
}

function ComponentPane() {
  const sections = ["文件处理", "设计算法", "数据管理"];
  const tools: [string, React.ReactNode][] = [
    ["新流程指示", <Bolt key="b" className="h-[30px] w-[22px]" />],
    ["Bom查询2", <OpenFolder key="f" />],
    ["预审关键物料", <OpenFolder key="g" />],
    ["Nope单审核", <Person key="p" />],
  ];
  return (
    <aside className={`flex w-[122px] shrink-0 flex-col border-r border-[#7d93b5] bg-[#eef4fb] text-xs text-[#16305c] ${SERIF}`}>
      <header className="flex h-9 shrink-0 items-center bg-[linear-gradient(180deg,#f5f9fe,#e6effa)] pr-2 pb-1 pl-2 text-black">
        <h3 className="text-xs">组件库</h3>
        <span className="ml-7 border-y-[5px] border-r-[6px] border-y-transparent border-r-[#16305c]" />
        <FaSignInAlt className="ml-auto size-3.5 text-[#1f3550]" />
      </header>
      <div className="mr-1 flex min-h-0 flex-1 flex-col border border-[#8ba3c6] bg-white">
        {sections.map((s, i) => (
          <button
            type="button"
            key={s}
            className={`flex h-[25px] shrink-0 items-center border-b border-[#8ba3c6] pl-0.5 ${i === 2 ? "bg-[linear-gradient(180deg,#ffe0a8_0,#ffc878_40%,#ffad48_42%,#ffdf9c)]" : "bg-[linear-gradient(180deg,#f2f7fd,#d8e4f3)]"}`}
          >
            <PanelIcon />
            <span className="flex-1 pr-1 text-center">{s}</span>
          </button>
        ))}
        <ul className="flex flex-col gap-1.5 pt-1">
          {tools.map(([t, icon]) => (
            <li key={t}>
              <button type="button" className="flex w-full flex-col items-center pr-1">
                <span className="flex h-[30px] items-center">{icon}</span>
                <span className="h-[18px] leading-[18px]">{t}</span>
              </button>
            </li>
          ))}
        </ul>
      </div>
    </aside>
  );
}

type Tool = { label: string; w: string; icon: React.ReactNode; caret?: boolean; off?: boolean };
const iconCls = "size-[13px]";
const tools: Tool[] = [
  { label: "内部审核", w: "w-12", icon: <FaPrint className={iconCls} />, caret: true },
  { label: "指示检查", w: "w-12", icon: <FaRegCheckSquare className={iconCls} />, caret: true },
  { label: "发送指示", w: "w-12", icon: <FaUpload className={iconCls} /> },
  { label: "文控上网", w: "w-12", icon: <FaCloudUploadAlt className="h-[13px] w-[15px]" /> },
  { label: "ECN升级", w: "w-[43px]", icon: <FaBinoculars className={iconCls} /> },
  { label: "重选开料图", w: "w-15", icon: <FaRegImage className="h-[13px] w-[15px]" />, off: true },
  { label: "生成MI流程", w: "w-15", icon: <FaCogs className="h-[13px] w-[15px]" /> },
  { label: "MI数据导入", w: "w-15", icon: <FaSignInAlt className={iconCls} />, caret: true },
  { label: "集成", w: "w-6", icon: <FaDownload className={iconCls} />, caret: true },
  { label: "数据对比", w: "w-12", icon: <FaCompressAlt className={iconCls} />, caret: true },
  { label: "选择母板", w: "w-12", icon: <FaRandom className={iconCls} />, caret: true },
  { label: "合拼模块", w: "w-12", icon: <FaListOl className={iconCls} /> },
  { label: "导出流程指示", w: "w-[72px]", icon: <FaRegClock className={iconCls} /> },
];

function ToolButton({ label, w, icon, caret, off }: Tool) {
  return (
    <button type="button" disabled={off} className={`flex h-full shrink-0 flex-col items-center pt-0.5 whitespace-nowrap ${w} ${off ? "text-[#8d9299]" : "text-[#1f3550]"}`}>
      {icon}
      <span className="mt-1 leading-[18px]">{label}</span>
      {caret && <Caret className="mt-5" />}
    </button>
  );
}

function Toggle({ label, sub, id }: { label: string; sub?: string; id: string }) {
  return (
    <div className="flex w-[66px] shrink-0 flex-col items-center whitespace-nowrap pt-[7px] text-[#16305c]">
      <button type="button" role="switch" aria-checked="false" aria-labelledby={id} className="flex h-[22px] w-[66px] overflow-hidden rounded-xs border border-[#a3b0bf] bg-[linear-gradient(180deg,#eef2f7,#fbfcfe)]">
        <span className="w-7 border-r border-[#a3b0bf] bg-[linear-gradient(135deg,#f2f4f6,#b9c1cb)]" />
        <span className="flex-1 text-center text-[11px]/5 font-bold text-[#737b86]">OFF</span>
      </button>
      <span id={id} className="mt-[5px] text-center leading-[17px]">
        {label}
        {sub && <span className="block">{sub}</span>}
      </span>
    </div>
  );
}

function Ribbon() {
  return (
    <div className={`flex h-[86px] shrink-0 overflow-hidden border-b border-[#5f7183] bg-[linear-gradient(180deg,#f1f7fe,#d8e4f1)] pl-1.5 text-xs ${SERIF}`}>
      <ToolButton label="型号查询(F)" w="w-[68px]" icon={<FaSearch className={iconCls} />} caret />
      <span className="w-3.5 shrink-0" />
      <Toggle label="编写流程(R)" id="t1" />
      <span className="w-[22px] shrink-0" />
      <Toggle label="启动修改(E)" sub="取消(Z)" id="t2" />
      <span className="w-3 shrink-0" />
      <ToolButton label="保存信息(S)" w="w-[66px]" icon={<FaCheck className={iconCls} />} off />
      <div className="ml-4 flex gap-[15px]">
        {tools.map((t) => (
          <ToolButton key={t.label} {...t} />
        ))}
      </div>
    </div>
  );
}

const mainCols: [string, string, string][] = [
  ["生产型号", "w-[70px]", "GA06105CA0"], ["新生产型号", "w-[94px]", "10011600008956"], ["升级前旧生产型号", "w-[112px]", ""], ["S板", "w-[35px]", ""],
  ["订单工厂", "w-[65px]", "P2"], ["BOM工厂", "w-[69px]", "P2"], ["板厚", "w-[41px]", ""], ["板材", "w-[39px]", ""], ["验收标准", "w-[120px]", "烽火通信标准"],
  ["成品长度", "w-[64px]", "340.000"], ["成品宽度", "w-[64px]", "215.000"], ["PNL规格", "w-[63px]", ""], ["字符", "w-[58px]", "白色字符"], ["阻焊", "w-[40px]", "绿色"],
  ["终端客户代码", "w-[88px]", "A061"], ["型号创建时间", "", "2021/12/9"],
];

function cellSize(s: string) {
  if (s.length > 12) return "text-[10px]";
  return /[\u4e00-\u9fff]/.test(s) ? "text-xs" : "text-[11px]";
}

function MainInfo() {
  return (
    <section className="flex h-[131px] shrink-0 flex-col bg-[#f1f7fe] px-[3px]">
      <div className="relative -mx-[3px] h-5 shrink-0">
        <div className="mt-[9px] h-3 rounded-tl-md border-t border-l border-[#5f7183]" />
        <h3 className={`absolute -top-px left-[634px] h-[21px] w-[66px] rounded-b-sm border border-[#5f7183] bg-[linear-gradient(180deg,#f6faff,#e3edf8)] text-center text-xs/[15px] text-[#1c3070] ${SANS}`}>主要信息</h3>
      </div>
      <div className="flex min-h-0 flex-1 flex-col overflow-hidden border border-[#8ba3c6] bg-white">
        <table className="w-full table-fixed border-collapse text-xs text-black">
          <thead>
            <tr className={`h-8 bg-[linear-gradient(180deg,#f3f8fe,#e2ecf8)] ${SANS}`}>
              <th className="relative w-[33px] border-r border-b border-[#8ba3c6]"><Corner /></th>
              {mainCols.map(([h, w]) => (
                <th key={h} className={`overflow-hidden border-r border-b border-[#8ba3c6] p-0 font-normal whitespace-nowrap ${w} ${h === "型号创建时间" ? "pl-3.5" : ""}`}>{h}</th>
              ))}
            </tr>
          </thead>
          <tbody>
            <tr className={`h-[22px] bg-[#aed2f6] ${MONO}`}>
              <td className="border-r border-b border-[#8ba3c6] bg-[#c8cdd3] pl-[3px]">
                <span className="block w-0 border-y-4 border-l-4 border-y-transparent border-l-black" />
              </td>
              {mainCols.map(([h, , v]) => (
                <td key={h} className={`overflow-hidden border-r border-[#bfdcf8] p-0 pl-px leading-4 whitespace-nowrap ${cellSize(v)}`}>{v}</td>
              ))}
            </tr>
          </tbody>
        </table>
        <ScrollH className="mt-auto h-[17px]" thumb="w-[979px]" />
      </div>
      <div className="h-[3px] shrink-0" />
    </section>
  );
}

type TreeRow = { n: string; folder?: boolean; last?: boolean; st?: string; rev?: boolean };
const tree: TreeRow[] = [
  { n: "去毛刺3", last: true }, { n: "AOI1", folder: true }, { n: "外层AOI1", last: true }, { n: "阻焊", folder: true }, { n: "阻焊前处理" }, { n: "丝印" }, { n: "预烘" }, { n: "曝光" },
  { n: "显影", last: true }, { n: "字符", folder: true }, { n: "字符" }, { n: "终固化", last: true }, { n: "沉金", folder: true }, { n: "喷砂" }, { n: "板边包胶" }, { n: "沉金" },
  { n: "水洗烘干", last: true }, { n: "电子测试", folder: true, st: "已编写", rev: false }, { n: "阻抗测试" }, { n: "电子测试", last: true, st: "已编写", rev: false },
];

function TreeCell({ r }: { r: TreeRow }) {
  return (
    <div className="flex h-[19px] items-center">
      {r.folder ? (
        <>
          <span className="ml-[21px] flex h-full w-[9px] flex-col items-center">
            <span className="w-0 flex-1 border-l border-dotted border-black" />
            <span className="flex h-[9px] w-[9px] items-center border border-[#808890] bg-white px-px"><span className="h-px w-full bg-black" /></span>
            <span className="w-0 flex-1 border-l border-dotted border-black" />
          </span>
          <span className="w-2 border-t border-dotted border-black" />
          <FolderIcon />
          <span className="ml-[5px]">{r.n}</span>
        </>
      ) : (
        <>
          <span className="ml-[25px] h-full w-4 border-l border-dotted border-black" />
          <span className={`w-0 border-l border-dotted border-black ${r.last ? "mb-auto h-2.5" : "h-full"}`} />
          <span className="mr-1 w-2.5 border-t border-dotted border-black" />
          <FileIcon />
          <span className="ml-1.5">{r.n}</span>
        </>
      )}
    </div>
  );
}

function ProcessTree() {
  const cols: [string, string][] = [["流程", "w-[155px] pl-0"], ["BOM工厂", "w-[55px] pl-0.5"], ["编写人", "w-[75px] pl-2"], ["核审人", "w-[75px] pl-2"], ["状态", "w-[75px] pl-2"], ["PNL", "pl-2"]];
  return (
    <div className="flex min-w-0 flex-1 bg-[#cbe8cf]">
      <div className="flex min-w-0 flex-1 flex-col">
        <div className="flex min-h-0 flex-1 flex-col overflow-hidden">
          <table className={`w-full table-fixed border-collapse text-xs text-black ${SERIF}`}>
            <thead className="relative z-10">
              <tr className="h-[18px] bg-[linear-gradient(180deg,#f3f8fe,#dfe9f6)]">
                {cols.map(([c, w]) => (
                  <th key={c} className={`overflow-hidden border-r border-b border-[#a3b7d4] py-0 pr-0 text-left leading-4 font-normal whitespace-nowrap ${w}`}>{c}</th>
                ))}
              </tr>
            </thead>
            <tbody className="relative -top-3">
              {tree.map((r, i) => (
                <tr key={i} className="h-[19px] leading-[18px] whitespace-nowrap">
                  <td className="p-0"><TreeCell r={r} /></td>
                  <td className="border-l border-[#c0dcc8] p-0 pl-1.5">P2</td>
                  <td className="border-l border-[#c0dcc8] p-0 pl-1.5">谭丽红</td>
                  <td className="border-l border-[#c0dcc8] p-0 pl-1.5">{r.rev === false ? "" : "谭丽红"}</td>
                  <td className="border-l border-[#c0dcc8] p-0 pl-1.5">{r.st ?? "已审核"}</td>
                  <td className="border-l border-[#c0dcc8] p-0" />
                </tr>
              ))}
            </tbody>
          </table>
        </div>
        <ScrollH className="z-10 h-[18px]" thumb="w-[260px]" />
      </div>
      <div className="z-10 mb-[18px] flex w-[17px] shrink-0 flex-col items-center justify-between bg-[#f7f8fa] py-1.5">
        <span className="border-x-[5px] border-b-[5px] border-x-transparent border-b-[#4a5058]" />
        <span className="mt-auto mb-12 flex h-[52px] w-[15px] items-center justify-center border border-[#8b929c] bg-[linear-gradient(90deg,#f4f5f7,#e0e3e8)]">
          <span className="h-[7px] w-2 bg-[repeating-linear-gradient(180deg,#777_0_1px,transparent_1px_2px)]" />
        </span>
        <span className="border-x-[5px] border-t-[5px] border-x-transparent border-t-[#4a5058]" />
      </div>
    </div>
  );
}

function ProcessPanel() {
  return (
    <section className="flex min-w-0 flex-1 flex-col border-t border-r border-[#5f7183] bg-[#f1f7fe]">
      <div className="relative h-[21px] shrink-0">
        <div className="mt-2.5 h-[11px] rounded-t-md border-x border-t border-[#5f7183]" />
        <h3 className={`absolute -top-px left-[274px] h-[21px] w-[151px] rounded-b-sm border border-[#5f7183] bg-[linear-gradient(180deg,#f6faff,#e3edf8)] text-center text-xs/[15px] whitespace-nowrap text-[#1c3070] ${SERIF}`}>【GA06105CA0】工艺流程</h3>
      </div>
      <div className="mr-[3px] mb-[3px] ml-1 flex min-h-0 flex-1">
        <div className="relative w-[20px] shrink-0 bg-[linear-gradient(90deg,#c9dbf8,#eef5ff)]">
          <svg viewBox="0 0 20 94" className="absolute inset-x-0 top-1 h-[94px] w-full" preserveAspectRatio="none" aria-hidden="true">
            <path d="M21 .5H3L1 3V71L20 90" fill="#b9d0f5" stroke="#5a7cae" />
          </svg>
          <button type="button" className={`absolute top-4 left-0.5 text-[13px]/4 font-bold text-black [text-orientation:sideways] [writing-mode:vertical-rl] ${SANS}`}>设备结构</button>
        </div>
        <div className="flex w-[197px] shrink-0 flex-col border border-[#3f639c] bg-[linear-gradient(90deg,#8fb1e8,#dceafd)] px-px pt-[5px] pl-1.5">
          <div className={`flex h-[35px] shrink-0 items-center justify-between bg-[#f3f3f3] pr-[7px] pl-3.5 text-xs text-[#16305c] ${SANS}`}>
            <span className="pb-0.5">单击节点加载工艺流程</span>
            <FaComment className="h-6 w-6 text-[#bfba00]" />
          </div>
          <div className="h-[278px] border border-[#8fa8b8] bg-[#cbe8cf]" />
        </div>
        <SplitV className="w-[5px] pt-[168px]" />
        <ProcessTree />
      </div>
    </section>
  );
}

const params: [string, string, string][] = [
  ["铣板程序1", "ga06105ca...", ""], ["铣板程序2", "/", ""], ["铣板程序3", "/", ""], ["外形图纸1", "ga06105ca...", ""], ["外形图纸2", "/", ""], ["外形图纸3", "/", ""],
  ["外形图纸4", "/", ""], ["是否有内定位孔", "Y", ""], ["外形露铜图纸", "/", ""], ["单元尺寸1", "340.00X20...", "mm"], ["单元尺寸2", "/", "mm"], ["单元板尺寸公差", "+/-0.1", "mm"],
  ["板边是否有钻槽设计", "N", ""], ["是否采用粗铣+精铣", "N", ""], ["异形槽个数", "/", ""], ["叠板块数", "/", ""],
];

function SlantTab({ label, w }: { label: string; w: string }) {
  return (
    <div className="flex h-7 shrink-0 items-end overflow-hidden border-b-[5px] border-[#8fb3e8] bg-[linear-gradient(180deg,#c4d8f8,#fff)]">
      <button type="button" className={`relative flex h-5 shrink-0 items-center justify-end pr-3 text-[13px]/4 font-bold whitespace-nowrap text-black ${w} ${SANS}`}>
        <svg viewBox="0 0 100 20" preserveAspectRatio="none" className="absolute inset-0 h-full w-full" aria-hidden="true">
          <path d="M0 20Q5 19 9 15L22 3Q24 1 28 1H98Q100 1 100 3V20" fill="#b4cdf5" stroke="#3f639c" />
        </svg>
        <span className="relative">{label}</span>
      </button>
    </div>
  );
}

function ParamPanel() {
  return (
    <section className="flex w-[427px] shrink-0 flex-col overflow-hidden border-t border-l border-[#5f7183] bg-[#e6effa]">
      <div className={`flex h-[26px] shrink-0 items-stretch border-b border-[#a9bcd6] bg-[linear-gradient(180deg,#b9cde8,#e4edf8)] text-xs text-[#101828] ${SANS}`}>
        <button type="button" className="relative w-[68px] border border-[#1c4f9c] bg-[linear-gradient(180deg,#2d66b8,#4587dc)] pr-1.5 pb-1 text-[13px] font-bold whitespace-nowrap text-white">
          基本信息
          <span className="absolute bottom-0 left-7 border-x-[6px] border-b-[6px] border-x-transparent border-b-white" />
        </button>
        <button type="button" className="ml-1.5 pb-1">拓展信息</button>
        <button type="button" className="ml-[23px] pb-1">工时</button>
      </div>
      <div className="flex min-h-0 flex-1">
        <div className="flex w-[375px] shrink-0 flex-col overflow-hidden">
          <SlantTab label="基本参数" w="w-[100px]" />
          <table className="w-full table-fixed border-collapse text-xs text-black">
            <thead>
              <tr className={`h-8 bg-[linear-gradient(180deg,#f3f8fe,#e2ecf8)] ${SANS}`}>
                <th className="relative w-[33px] border-r border-b border-[#8ba3c6]"><Corner /></th>
                <th className="w-[118px] border-r border-b border-[#8ba3c6] font-normal">项目</th>
                <th className="w-20 border-r border-b border-[#8ba3c6] font-normal">参数</th>
                <th className="w-15 border-r border-b border-[#8ba3c6] font-normal">单位</th>
                <th className="w-15 border-r border-b border-[#8ba3c6] font-normal">修改</th>
                <th className="border-b border-[#8ba3c6] bg-[#d3dfee]" />
              </tr>
            </thead>
            <tbody className={MONO}>
              {params.map(([n, v, u], i) => {
                const even = i % 2 === 1;
                const c = "relative border border-[#c3d5ec] p-0 pl-px leading-4 whitespace-nowrap";
                return (
                  <tr key={n} className={`h-[22px] ${even ? "bg-[#f3f3f3]" : "bg-white"}`}>
                    <td className="border-r border-b border-[#8ba3c6] bg-[linear-gradient(90deg,#dce8f5_60%,#bccfe6)] p-0 pl-1">
                      {i === 0 && <span className="block w-0 border-y-4 border-l-4 border-y-transparent border-l-black" />}
                    </td>
                    <td className={`${c} ${i === 0 ? "bg-[#aed2f6]" : even ? "" : "bg-[#e9f2fc]"}`}>{n}</td>
                    <td className={`${c} ${v.length > 6 ? "text-[10px]" : "text-[11px]"}`}>
                      {v}
                      {n === "单元尺寸1" && <span className="absolute -top-1.5 -left-4 z-10 h-8 w-[117px] border-2 border-[#e01010] shadow-[2px_3px_4px_#888]" />}
                    </td>
                    <td className={`${c} text-[10px] ${even ? "" : "bg-[#e9f2fc]"}`}>{u}</td>
                    <td className={`${c} text-[11px]`}>Y</td>
                    <td className="border-b border-[#c3d5ec] bg-white" />
                  </tr>
                );
              })}
            </tbody>
          </table>
        </div>
        <SplitV className="w-[7px] pt-[168px]" />
        <div className="flex min-w-0 flex-1 flex-col overflow-hidden border-l border-[#5f7fae]">
          <SlantTab label="工艺备注" w="w-[100px]" />
          <h4 className={`h-6 shrink-0 border-b border-[#a9bcd6] bg-[#eef4fc] pl-0.5 text-xs/[23px] whitespace-nowrap text-[#1c3070] ${SANS}`}>工艺备注</h4>
          <div className="flex-1 bg-[#efefef]" />
        </div>
      </div>
    </section>
  );
}

function StatusBar() {
  return (
    <footer className={`flex h-[29px] shrink-0 items-center border-t-2 border-[#4f6174] bg-[linear-gradient(180deg,#f1f6fd,#d6e3f2)] pl-1.5 text-xs whitespace-nowrap text-[#1c3a70] ${SERIF}`}>
      <FaThLarge className="size-6 text-[#1a3478]" />
      <span className="ml-2 w-12">信息中心</span>
      <FaMale className="ml-1.5 size-6 text-[#1a3478]" />
      <span className="ml-1.5 w-[84px]">谷松</span>
      <span className="w-[228px]">Model:【正式】||DB:【正式库】</span>
      <span className="whitespace-pre">兴森快捷  EMS工程系统  Version: 1.0.0.53</span>
      <FaRegClock className="mr-2.5 ml-auto size-5" />
      <time className={`w-[145px] text-[11px] ${MONO}`}>2021-12-13 12:04:59</time>
    </footer>
  );
}

function EdsWindow() {
  return (
    <div className="absolute top-[274px] right-[122px] bottom-0 left-[180px] flex flex-col overflow-hidden rounded-t-lg border-t border-[#e8e8e8] bg-[linear-gradient(180deg,#707478_0,#55595d_10%,#a8acb0_30%,#14181c_31%,#0c1014_88%,#8fc4ea_94%,#6aa8d8_100%)] pr-[7px] pl-[7px] shadow-[inset_1px_0_0_#d8dcdf,inset_-1px_0_0_#d8dcdf]">
      <div className="-mr-1.5 -ml-1.5 shrink-0">
        <TitleBar />
      </div>
      <div className="flex min-h-0 flex-1 border-t border-[#7f95b4]">
        <NavRail />
        <ComponentPane />
        <main className="flex min-w-0 flex-1 flex-col bg-[#dfe9f5]">
          <div className="flex h-8 shrink-0 border-b border-[#a3b7d4] bg-[#b9cce6]">
            <div className={`-mb-px flex w-[129px] items-center bg-[linear-gradient(180deg,#f7fbff,#f1f7fe)] pb-1 pl-2 text-[13px] font-bold whitespace-nowrap text-[#101c3c] ${SANS}`}>
              <Bolt className="h-5 w-3.5" />
              <span className="ml-2.5">新流程指示</span>
              <button type="button" aria-label="关闭标签" className="ml-auto pr-2 text-base/4 font-normal text-[#33445c]">×</button>
            </div>
            <span className="mr-1.5 ml-auto self-center border-x-[5px] border-t-[5px] border-x-transparent border-t-[#1f3a66]" />
          </div>
          <Ribbon />
          <MainInfo />
          <div className="flex h-1 shrink-0 items-center justify-end bg-[linear-gradient(180deg,#b9c4d0,#8795a5)] pr-[432px]">
            <span className="border-x-4 border-b-4 border-x-transparent border-b-[#24407a]" />
            <span className="mx-2.5 h-0.5 w-9 bg-[repeating-linear-gradient(90deg,#24407a_0_2px,transparent_2px_4px)]" />
            <span className="border-x-4 border-b-4 border-x-transparent border-b-[#24407a]" />
          </div>
          <div className="flex min-h-0 flex-1">
            <ProcessPanel />
            <SplitV className="w-1.5 pt-[182px]" />
            <ParamPanel />
          </div>
        </main>
      </div>
      <StatusBar />
    </div>
  );
}

export default function App() {
  return (
    <div className="relative h-screen w-full overflow-hidden bg-black">
      <GraphicEditor />
      <EdsWindow />
    </div>
  );
}
